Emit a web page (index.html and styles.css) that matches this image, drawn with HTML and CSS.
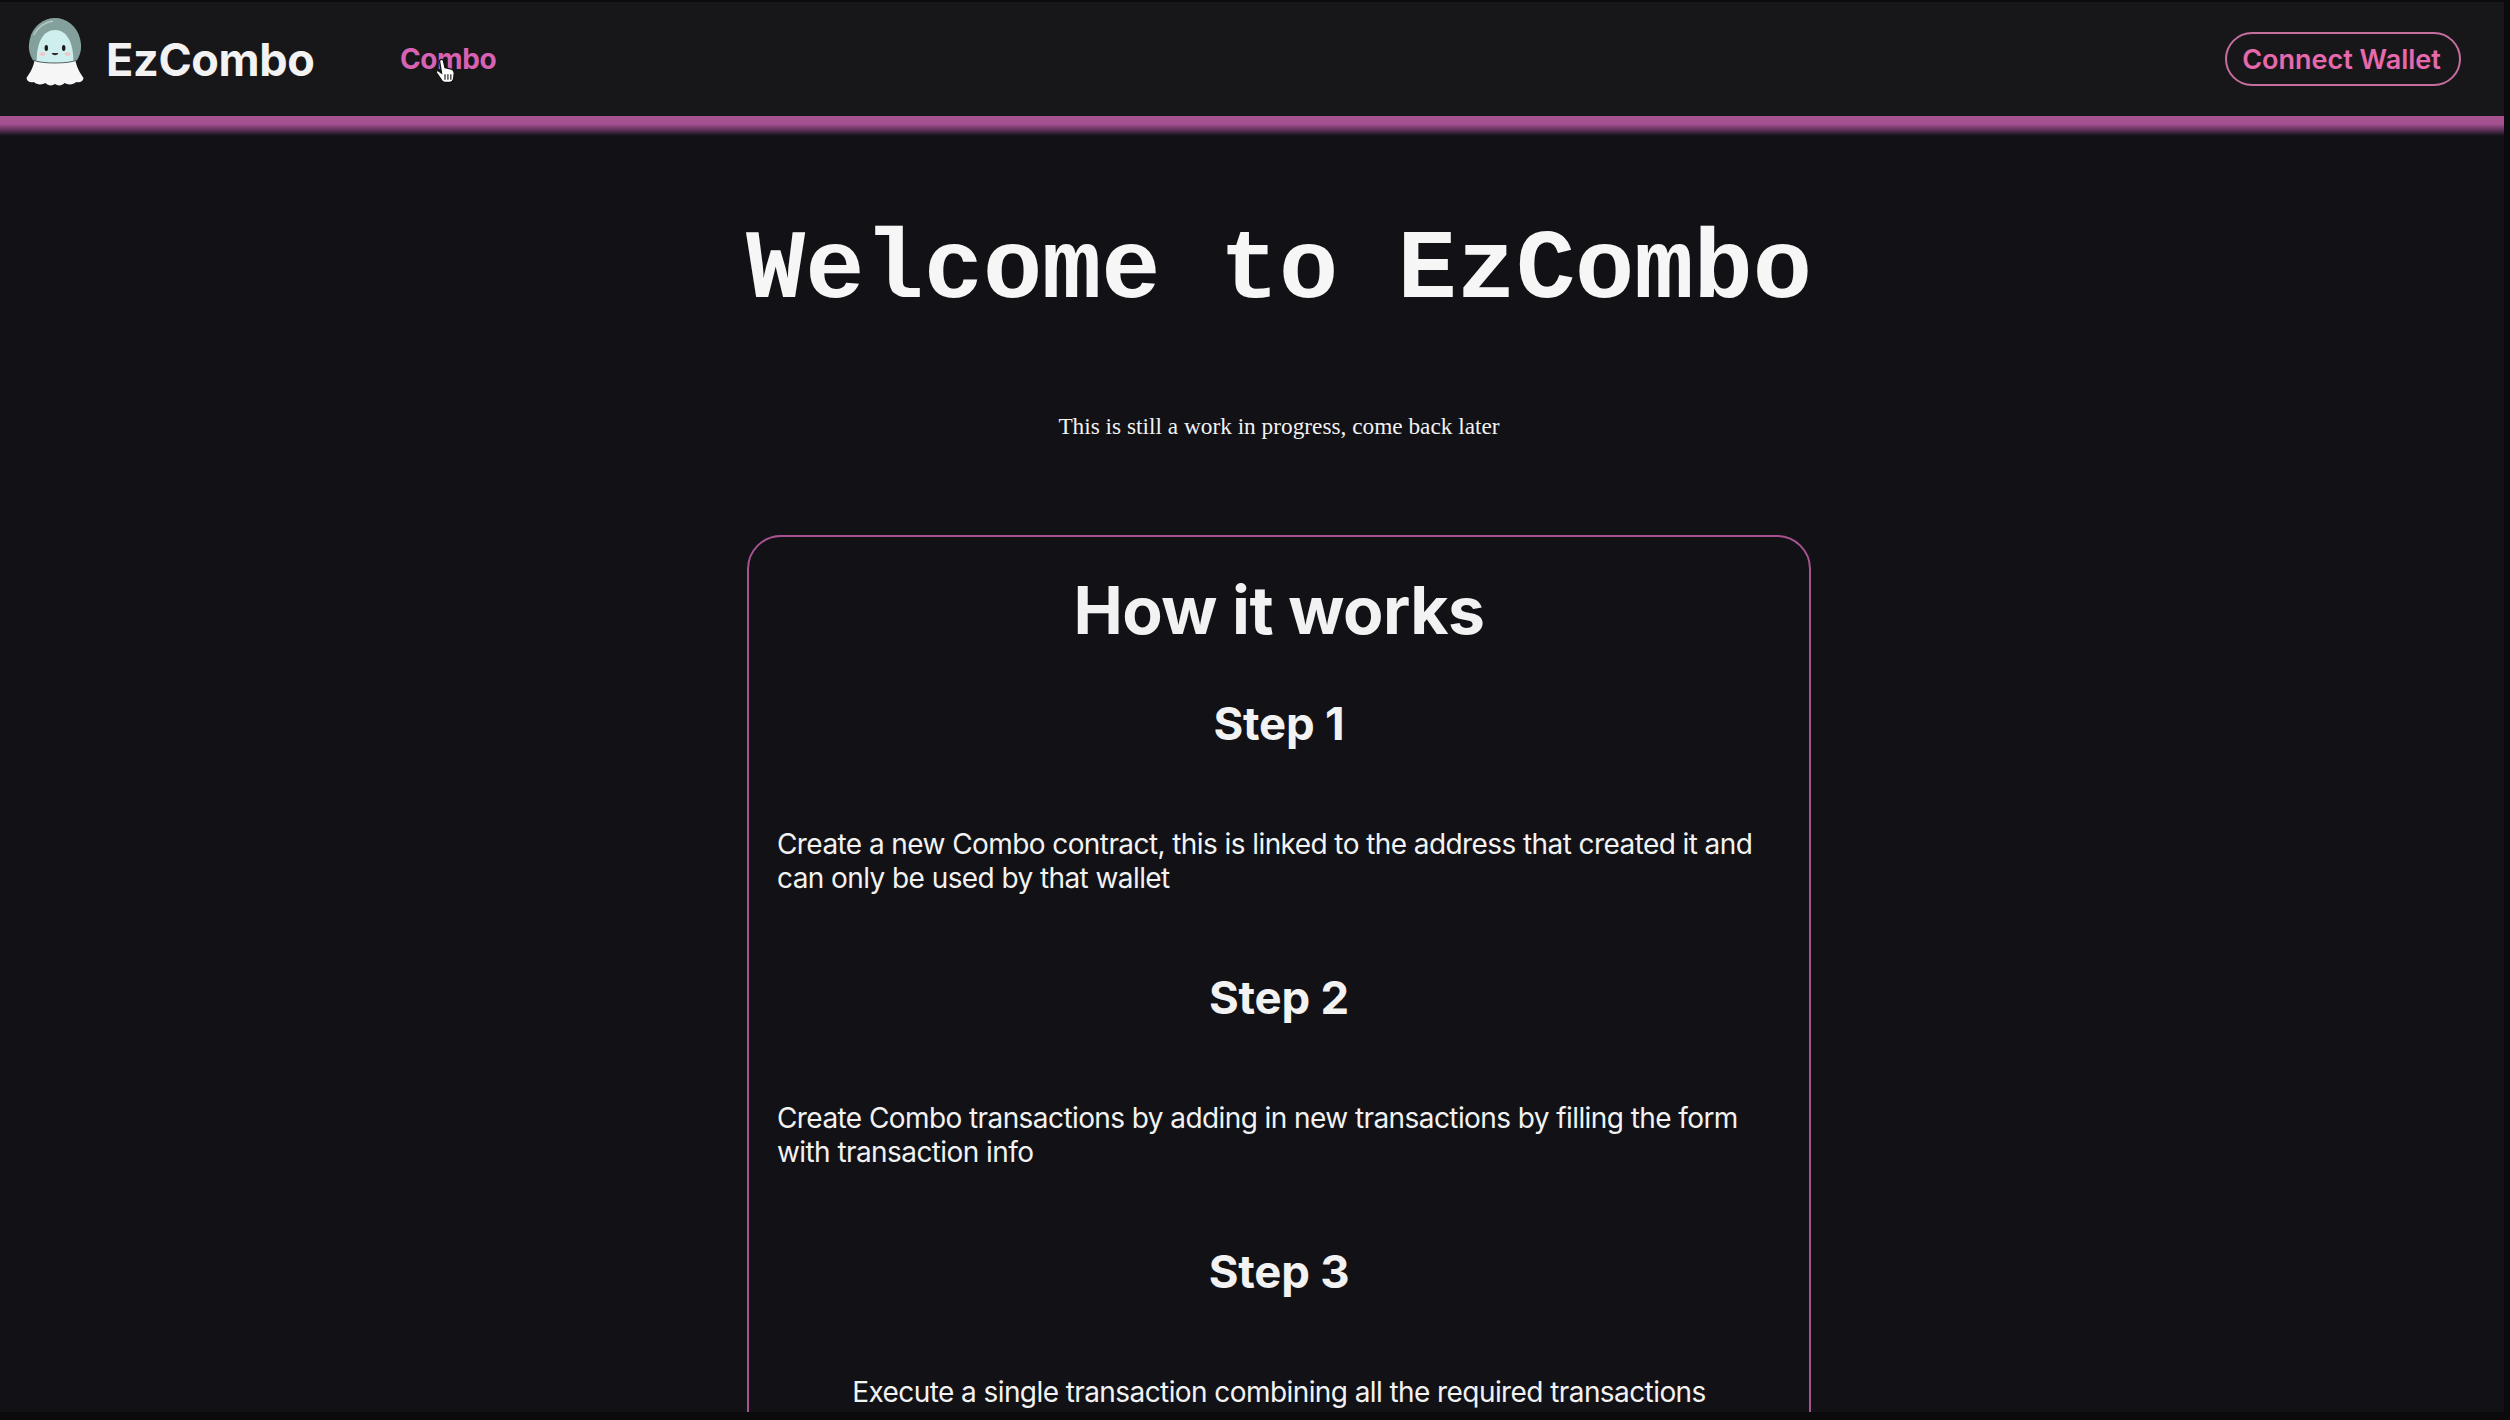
FILE: index.html
```html
<!DOCTYPE html>
<html lang="en">
<head>
<meta charset="utf-8">
<title>EzCombo</title>
<link rel="stylesheet" href="styles.css">
</head>
<body>
<div class="frame">
  <header class="nav">
    <div class="brand">
      <svg class="logo" viewBox="0 0 60 70" width="58" height="70" preserveAspectRatio="none" aria-hidden="true">
        <path d="M9 42C8 50 4 56 0.500 61C1 65 5 66 8 65C11 68 17 68 20 66C23 69 27 69 30 67C33 69 37 69 40 66C43 68 49 68 52 65C55 66 59 65 59.500 61C56 56 52 50 51 42Z" fill="#f7f6f6"/>
        <path d="M7 43C3 36 2 30 4 22C7 9 18 1 30 1C42 1 53 9 56 22C58 30 57 36 53 43C45 47 15 47 7 43Z" fill="#84a09c"/>
        <path d="M11 44C11 25 18 13 30 13C42 13 49 25 49 44C40 47 20 47 11 44Z" fill="#cfeeee"/>
        <path d="M7 43C15 47 45 47 53 43" fill="none" stroke="#51625f" stroke-width="1"/>
        <path d="M8 18C12 10 20 5 28 4" fill="none" stroke="#b7c9c6" stroke-width="1.500"/>
        <ellipse cx="21" cy="31" rx="1.800" ry="3" fill="#1c1c1c"/>
        <ellipse cx="39" cy="31" rx="1.800" ry="3" fill="#1c1c1c"/>
        <path d="M26.500 36C27.500 39 32.500 39 33.500 36Z" fill="#3a2b2b"/>
        <ellipse cx="17" cy="37" rx="3" ry="1.800" fill="#f3c4c8"/>
        <ellipse cx="43" cy="37" rx="3" ry="1.800" fill="#f3c4c8"/>
      </svg>
      <span class="brand-name">EzCombo</span>
    </div>
    <nav class="links">
      <a class="link" href="#">Combo</a>
      <svg class="cursor" viewBox="0 0 20 24" width="22" height="26" aria-hidden="true">
        <path d="M6 1.500C7 1 8.200 1.500 8.500 2.500L10 9L15 10C17 10.500 18.500 12 18.500 14L18 19C17.500 21 16 22.500 14 22.500L10 22.500C8.500 22.500 7.500 21.800 6.800 20.500L2 13.500C1.300 12.300 2.800 11 4 12L6.800 14L5 3C4.900 2.300 5.300 1.800 6 1.500Z" fill="#fff" stroke="#111" stroke-width="1.200"/>
        <path d="M10 15V20M12.700 15V20M15.400 15V20" stroke="#111" stroke-width="1"/>
      </svg>
    </nav>
    <button class="wallet" type="button">Connect Wallet</button>
  </header>
  <div class="bar"></div>
  <main class="main">
    <h1 class="title">Welcome to EzCombo</h1>
    <p class="note">This is still a work in progress, come back later</p>
    <section class="card">
      <h2 class="card-title">How it works</h2>
      <h3 class="step">Step 1</h3>
      <p class="text">Create a new Combo contract, this is linked to the address that created it and can only be used by that wallet</p>
      <h3 class="step">Step 2</h3>
      <p class="text">Create Combo transactions by adding in new transactions by filling the form with transaction info</p>
      <h3 class="step">Step 3</h3>
      <p class="text text-center">Execute a single transaction combining all the required transactions</p>
    </section>
  </main>
</div>
</body>
</html>
```

FILE: styles.css
```css
* { box-sizing: border-box; }
html, body { margin: 0; height: 100%; background: #0b0b0d; overflow: hidden; }
.frame {
  width: 2504px;
  height: 1410px;
  margin-top: 2px;
  background: #111116;
  color: #f2f2f2;
  overflow: hidden;
  font-family: Inter, "Liberation Sans", sans-serif;
}
.nav {
  display: flex;
  align-items: center;
  height: 114px;
  padding: 0 43px 0 26px;
  background: #17171a;
}
.bar {
  height: 20px;
  background: linear-gradient(#a85390 0, #a35090 40%, #5e3158 70%, #111116 100%);
}
.brand { display: flex; align-items: center; gap: 22px; width: 374px; }
.logo { display: block; margin-top: -14px; }
.brand-name { font-size: 45px; font-weight: 700; letter-spacing: -0.35px; }
.links { position: relative; flex: 1; }
.link { color: #d762b4; font-size: 28px; font-weight: 700; letter-spacing: -0.4px; text-decoration: none; }
.cursor { position: absolute; left: 34px; top: 16px; }
.wallet {
  height: 54px;
  width: 236px;
  padding: 0 3px 0 0;
  background: transparent;
  border: 2px solid #c56f9f;
  border-radius: 27px;
  color: #e769ad;
  font: 600 27px Inter, "Liberation Sans", sans-serif;
}
.main { display: flex; flex-direction: column; align-items: center; padding: 86px 0 0 54px; }
.title {
  margin: 0;
  font: 700 98.7px/1 "Liberation Mono", monospace;
  color: #f6f6f6;
  white-space: nowrap;
}
.note {
  margin: 91px 0 0;
  font: 23.3px/28px "Liberation Serif", serif;
  color: #f2f2f2;
}
.card {
  width: 1064px;
  height: 1000px;
  margin-top: 95px;
  padding: 34px 28px 0;
  border: 2px solid #a85390;
  border-radius: 34px;
  text-align: center;
}
.card-title { margin: 0; font-size: 66px; line-height: 78px; font-weight: 700; letter-spacing: -0.5px; }
.step { margin: 49px 0 0; font-size: 45.5px; line-height: 52px; font-weight: 700; letter-spacing: -0.2px; }
.text { margin: 77px 0 0; font-size: 28px; line-height: 34px; text-align: left; letter-spacing: -0.58px; }
.text + .step { margin-top: 77px; }
.text-center { text-align: center; }
```
